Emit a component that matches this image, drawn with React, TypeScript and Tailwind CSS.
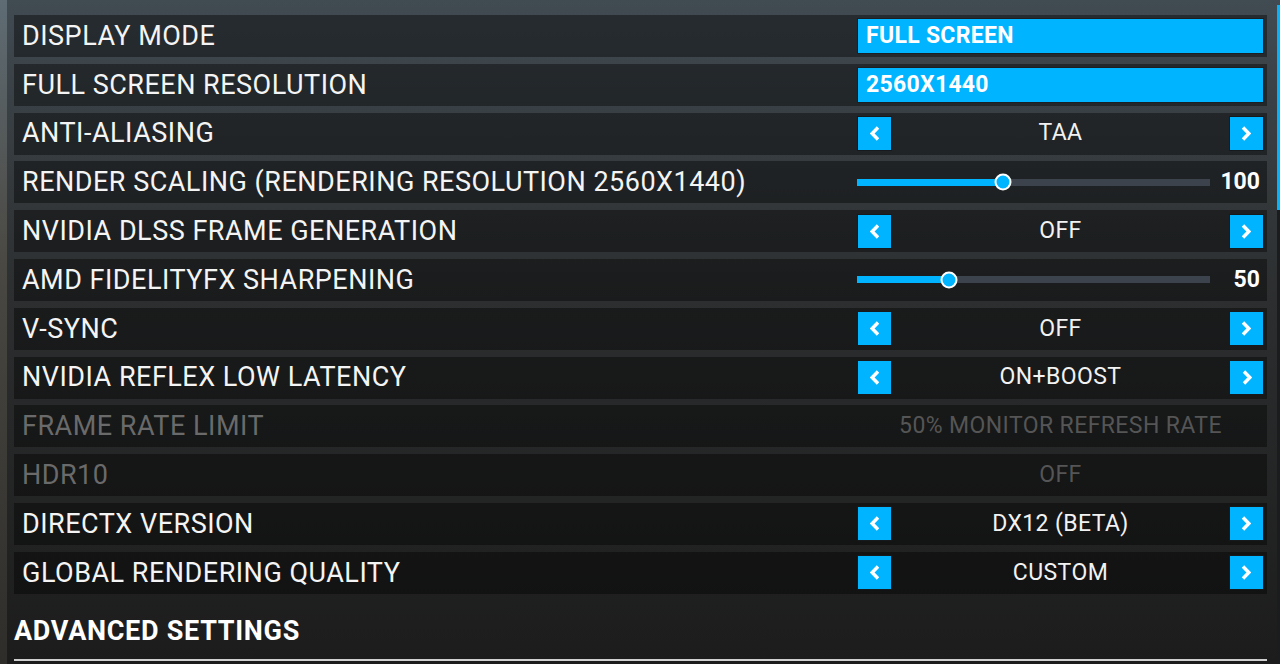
import { ReactNode } from "react";

type Row =
  | { label: string; kind: "select"; value: string }
  | { label: string; kind: "arrows"; value: string }
  | { label: string; kind: "slider"; value: number; pos: number }
  | { label: string; kind: "disabled"; value: string };

const rows: Row[] = [
  { label: "DISPLAY MODE", kind: "select", value: "FULL SCREEN" },
  { label: "FULL SCREEN RESOLUTION", kind: "select", value: "2560X1440" },
  { label: "ANTI-ALIASING", kind: "arrows", value: "TAA" },
  { label: "RENDER SCALING (RENDERING RESOLUTION 2560X1440)", kind: "slider", value: 100, pos: 146 },
  { label: "NVIDIA DLSS FRAME GENERATION", kind: "arrows", value: "OFF" },
  { label: "AMD FIDELITYFX SHARPENING", kind: "slider", value: 50, pos: 92 },
  { label: "V-SYNC", kind: "arrows", value: "OFF" },
  { label: "NVIDIA REFLEX LOW LATENCY", kind: "arrows", value: "ON+BOOST" },
  { label: "FRAME RATE LIMIT", kind: "disabled", value: "50% MONITOR REFRESH RATE" },
  { label: "HDR10", kind: "disabled", value: "OFF" },
  { label: "DIRECTX VERSION", kind: "arrows", value: "DX12 (BETA)" },
  { label: "GLOBAL RENDERING QUALITY", kind: "arrows", value: "CUSTOM" },
];

function ArrowButton({ dir }: { dir: "left" | "right" }) {
  return (
    <div className="w-[35px] h-[35px] bg-[#00b4ff] border border-[#161a1d] flex items-center justify-center shrink-0">
      <svg width="10" height="15" viewBox="0 0 10 15">
        {dir === "left" ? (
          <polyline points="8,1.5 2.2,7.5 8,13.5" fill="none" stroke="white" strokeWidth="3.4" />
        ) : (
          <polyline points="2,1.5 7.8,7.5 2,13.5" fill="none" stroke="white" strokeWidth="3.4" />
        )}
      </svg>
    </div>
  );
}

function Control({ row }: { row: Row }): ReactNode {
  if (row.kind === "select") {
    return (
      <div className="w-full h-[36px] bg-[#00b4ff] border border-[#1b2024] flex items-center pl-[8px] text-[23px] font-bold tracking-[0.3px] text-white">
        {row.value}
      </div>
    );
  }
  if (row.kind === "arrows") {
    return (
      <div className="w-full flex items-center justify-between">
        <ArrowButton dir="left" />
        <span className="text-[23px] tracking-[0.4px] text-[#f2f2f2]">{row.value}</span>
        <ArrowButton dir="right" />
      </div>
    );
  }
  if (row.kind === "slider") {
    return (
      <div className="w-full flex items-center">
        <div className="relative w-[353px] h-[7px] bg-[#3c434c]">
          <div className="h-full bg-[#00b4ff]" style={{ width: row.pos }} />
          <div
            className="absolute top-1/2 w-[17px] h-[17px] -translate-x-1/2 -translate-y-1/2 rounded-full bg-[#00b4ff] border-2 border-white"
            style={{ left: row.pos }}
          />
        </div>
        <span className="flex-1 text-right pr-[4px] text-[23px] font-bold text-white">{row.value}</span>
      </div>
    );
  }
  return (
    <div className="w-full flex items-center justify-center">
      <span className="text-[23px] tracking-[0.4px] text-[#555555]">{row.value}</span>
    </div>
  );
}

export default function App() {
  return (
    <div
      className="w-[1280px] h-[664px] overflow-hidden flex bg-gradient-to-b from-[#414b52] via-[#2c2e2f] via-45% to-[#1c1c1c]"
      style={{ fontFamily: "Roboto, 'Noto Sans', sans-serif" }}
    >
      <div className="w-[7px] shrink-0 bg-gradient-to-b from-[#5f6c74] via-[#4a4842] via-40% to-[#2f2d2a]" />

      <div className="flex-1 flex flex-col pl-[7px] pr-[10px] pt-[15px]">
        <div className="flex flex-col gap-[6.8px]">
          {rows.map((row) => (
            <div key={row.label} className="h-[42px] bg-black/40 flex items-center pl-[8px] pr-[3px]">
              <span
                className={
                  row.kind === "disabled"
                    ? "flex-1 text-[27px] text-[#6a6a6a] tracking-[0.5px]"
                    : "flex-1 text-[27px] text-[#f4f4f4] tracking-[0.5px]"
                }
              >
                {row.label}
              </span>
              <div className="w-[407px] flex items-center">
                <Control row={row} />
              </div>
            </div>
          ))}
        </div>

        <h2 className="mt-[21px] text-[27px] font-bold text-white leading-[32px] tracking-[0.7px]">ADVANCED SETTINGS</h2>
        <div className="mt-[12px] h-[2px] bg-[#d0d0d0]" />
      </div>

      <div className="w-[3px] shrink-0 flex flex-col">
        <div className="mt-[5px] h-[205px] bg-[#00b4ff]" />
        <div className="flex-1 bg-[#1a1c1d]" />
      </div>
    </div>
  );
}
